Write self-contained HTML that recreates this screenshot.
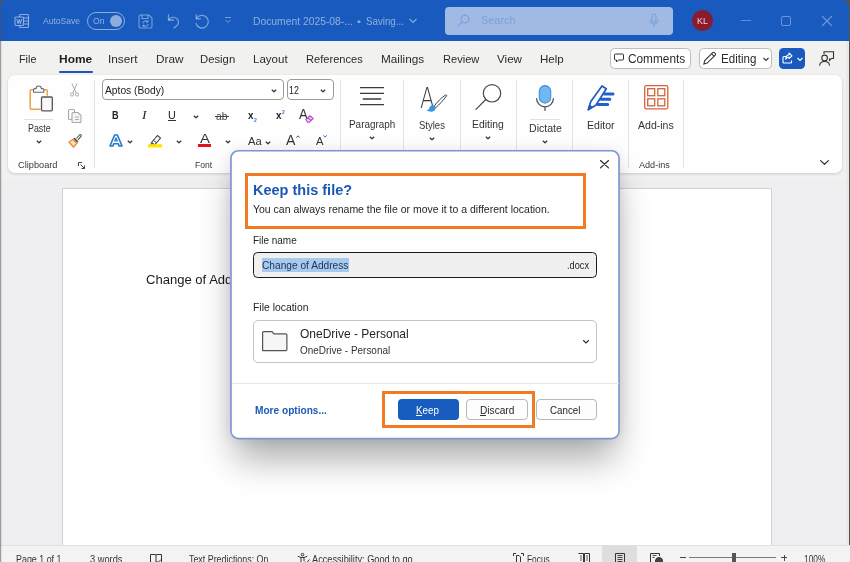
<!DOCTYPE html>
<html lang="en">
<head>
<meta charset="utf-8">
<title>Keep this file? - Word</title>
<style>
*{box-sizing:border-box;margin:0;padding:0}
html,body{width:850px;height:562px;overflow:hidden;background:#f1f1f1}
body{will-change:transform;position:relative;font-family:"Liberation Sans","DejaVu Sans",sans-serif;color:#242424;font-size:12px}
.abs{position:absolute}
.t{position:absolute;white-space:nowrap;line-height:1}
svg{position:absolute;overflow:visible}
svg.tx text{font-family:"Liberation Sans","DejaVu Sans",sans-serif;fill:#242424;white-space:pre}
#titlebar{position:absolute;left:0;top:0;width:850px;height:41px;background:#185abd}
#titlebar .tx text{fill:rgba(255,255,255,.5)}
#tabs{position:absolute;left:0;top:41px;width:850px;height:37px;background:#f1f1f0}
#ribbonbg{position:absolute;left:0;top:76px;width:850px;height:104px;background:#f1f1f1}
#ribbon{position:absolute;left:8px;top:75px;width:834px;height:98px;background:#fefefe;border-radius:7px;box-shadow:0 1px 3px rgba(0,0,0,.16)}
.sep{position:absolute;width:1px;background:#e2e2e2;top:80px;height:88px}
#docbg{position:absolute;left:0;top:180px;width:850px;height:366px;background:#efeef0}
#page{position:absolute;left:62.200px;top:188px;width:709.600px;height:358px;background:#fff;border:1px solid #d2d2d2}
#status{position:absolute;left:0;top:545px;width:850px;height:17px;background:#f3f3f3;border-top:1px solid #e0e0e0}
#dlg{position:absolute;left:230.100px;top:149.900px;width:389.800px;height:289.600px;background:#fff;border-radius:8.500px;box-shadow:0 25px 36px -5px rgba(0,0,0,.33),0 0 14px rgba(0,0,0,.09)}
#edge{position:absolute;left:0;top:4px;width:2px;height:558px;background:linear-gradient(90deg,rgba(80,80,80,.52) 0,rgba(80,80,80,.52) 50%,rgba(80,80,80,.12) 50%)}
</style>
</head>
<body>
<div id="titlebar">
<svg style="left:14px;top:13px" width="16" height="16" viewBox="0 0 16 16" fill="none" stroke="rgba(255,255,255,.5)" stroke-width="1.1"><rect x="5.5" y="1.500" width="9" height="13" rx="1"/><path d="M9.500 5h5M9.500 8h5M9.500 11h5"/><rect x="1" y="4" width="8.500" height="8.500" rx="1" fill="#185abd"/><path d="M2.800 6l1.200 4.600L5.200 6.600l1.200 4L7.700 6" stroke-width="1"/></svg>
<svg class="tx" style="left:43.00px;top:24.40px" width="1" height="1"><text x="0" y="0" textLength="37.00" lengthAdjust="spacingAndGlyphs" style="font-size:9.6px">AutoSave</text></svg>
<div class="abs" style="left:87px;top:12px;width:38px;height:18px;border:1px solid rgba(255,255,255,.5);border-radius:9px"></div>
<svg class="tx" style="left:93.00px;top:24.40px" width="1" height="1"><text x="0" y="0" textLength="11.50" lengthAdjust="spacingAndGlyphs" style="font-size:9.4px">On</text></svg>
<div class="abs" style="left:110px;top:15px;width:12px;height:12px;border-radius:50%;background:rgba(255,255,255,.5)"></div>
<svg style="left:138px;top:13.500px" width="15" height="15" viewBox="0 0 15 15" fill="none" stroke="rgba(255,255,255,.42)" stroke-width="1.100"><path d="M1 2.500A1.500 1.500 0 012.500 1H11l3 3v8.500a1.500 1.500 0 01-1.500 1.500h-10A1.500 1.500 0 011 12.500z"/><path d="M4 1v3.500h6V1"/><path d="M4.800 9.300a2.800 2.800 0 015-1.300M10.200 10a2.800 2.800 0 01-5 1.300" /><path d="M10 6.500V8.200H8.300M5 12.800V11.100h1.700" stroke-width=".9"/></svg>
<svg style="left:167px;top:13.500px" width="14" height="15" viewBox="0 0 14 15" fill="none" stroke="rgba(255,255,255,.42)" stroke-width="1.300" stroke-linecap="round" stroke-linejoin="round"><path d="M1.500 1v5h5"/><path d="M1.800 5.800C3.500 3.500 6.500 2.500 9 4c3 1.800 3.300 5.500 1 7.500L7 14"/></svg>
<svg style="left:194px;top:13px" width="16" height="16" viewBox="0 0 16 16" fill="none" stroke="rgba(255,255,255,.42)" stroke-width="1.300" stroke-linecap="round" stroke-linejoin="round"><path d="M2.300 1.800v4h4"/><path d="M2.600 5.500A6.300 6.300 0 112 10.500"/></svg>
<svg style="left:224px;top:17px" width="8" height="7" viewBox="0 0 8 7" fill="none" stroke="rgba(255,255,255,.42)" stroke-width="1"><path d="M1 .5h6M1.500 3l2.500 2.500L6.500 3"/></svg>
<svg class="tx" style="left:252.50px;top:25.00px" width="1" height="1"><text x="0" y="0" textLength="99.90" lengthAdjust="spacingAndGlyphs" style="font-size:11px">Document 2025-08-...</text></svg>
<svg class="tx" style="left:357.00px;top:25.00px" width="1" height="1"><text x="0" y="0" textLength="4.00" lengthAdjust="spacingAndGlyphs" style="font-size:9px">•</text></svg>
<svg class="tx" style="left:365.80px;top:25.00px" width="1" height="1"><text x="0" y="0" textLength="37.80" lengthAdjust="spacingAndGlyphs" style="font-size:11px">Saving...</text></svg>
<svg style="left:408.500px;top:18px" width="8" height="6" viewBox="0 0 8 6" fill="none" stroke="rgba(255,255,255,.5)" stroke-width="1.100"><path d="M.5 1l3.500 3.500L7.500 1"/></svg>
<div class="abs" style="left:444.8px;top:7px;width:227.99999999999994px;height:27.6px;border-radius:4px;background:#a1bae3"></div>
<svg style="left:456.500px;top:14px" width="13" height="13" viewBox="0 0 13 13" fill="none" stroke="#7a9fdb" stroke-width="1.200"><circle cx="8" cy="5" r="3.800"/><path d="M5.200 7.800L1 12" stroke-linecap="round"/></svg>
<svg class="tx" style="left:481.20px;top:24.20px" width="1" height="1"><text x="0" y="0" textLength="34.60" lengthAdjust="spacingAndGlyphs" style="font-size:11px;fill:#7a9fdb">Search</text></svg>
<svg style="left:649px;top:13px" width="10" height="15" viewBox="0 0 10 15" fill="none" stroke="#7a9fdb" stroke-width="1.100"><rect x="3" y="1" width="4" height="8" rx="2"/><path d="M1 7a4 4 0 008 0M5 11v2.500" stroke-linecap="round"/></svg>
<div class="abs" style="left:692px;top:10.2px;width:21px;height:21.0px;border-radius:50%;background:#8a1a2c"></div>
<svg class="tx" style="left:697.20px;top:23.80px" width="1" height="1"><text x="0" y="0" textLength="10.80" lengthAdjust="spacingAndGlyphs" style="font-size:8.6px;fill:#ecd3d7">KL</text></svg>
<div class="abs" style="left:741px;top:20px;width:10px;height:1px;background:rgba(255,255,255,.32)"></div>
<div class="abs" style="left:781px;top:16px;width:10px;height:10px;border:1px solid rgba(255,255,255,.36);border-radius:2px"></div>
<svg style="left:822px;top:16px" width="10" height="10" viewBox="0 0 10 10" stroke="rgba(255,255,255,.38)" stroke-width="1.100"><path d="M0 0l10 10M10 0L0 10"/></svg>
</div>
<div id="tabs"></div>
<svg class="tx" style="left:19.00px;top:63.00px" width="1" height="1"><text x="0" y="0" textLength="17.40" lengthAdjust="spacingAndGlyphs" style="font-size:11px;fill:#2b2b2b">File</text></svg>
<svg class="tx" style="left:108.40px;top:63.00px" width="1" height="1"><text x="0" y="0" textLength="29.60" lengthAdjust="spacingAndGlyphs" style="font-size:11px;fill:#2b2b2b">Insert</text></svg>
<svg class="tx" style="left:155.70px;top:63.00px" width="1" height="1"><text x="0" y="0" textLength="27.50" lengthAdjust="spacingAndGlyphs" style="font-size:11px;fill:#2b2b2b">Draw</text></svg>
<svg class="tx" style="left:199.80px;top:63.00px" width="1" height="1"><text x="0" y="0" textLength="35.20" lengthAdjust="spacingAndGlyphs" style="font-size:11px;fill:#2b2b2b">Design</text></svg>
<svg class="tx" style="left:253.40px;top:63.00px" width="1" height="1"><text x="0" y="0" textLength="34.60" lengthAdjust="spacingAndGlyphs" style="font-size:11px;fill:#2b2b2b">Layout</text></svg>
<svg class="tx" style="left:306.20px;top:63.00px" width="1" height="1"><text x="0" y="0" textLength="56.80" lengthAdjust="spacingAndGlyphs" style="font-size:11px;fill:#2b2b2b">References</text></svg>
<svg class="tx" style="left:381.40px;top:63.00px" width="1" height="1"><text x="0" y="0" textLength="43.10" lengthAdjust="spacingAndGlyphs" style="font-size:11px;fill:#2b2b2b">Mailings</text></svg>
<svg class="tx" style="left:442.80px;top:63.00px" width="1" height="1"><text x="0" y="0" textLength="36.40" lengthAdjust="spacingAndGlyphs" style="font-size:11px;fill:#2b2b2b">Review</text></svg>
<svg class="tx" style="left:497.20px;top:63.00px" width="1" height="1"><text x="0" y="0" textLength="25.00" lengthAdjust="spacingAndGlyphs" style="font-size:11px;fill:#2b2b2b">View</text></svg>
<svg class="tx" style="left:539.50px;top:63.00px" width="1" height="1"><text x="0" y="0" textLength="23.70" lengthAdjust="spacingAndGlyphs" style="font-size:11px;fill:#2b2b2b">Help</text></svg>
<svg class="tx" style="left:59.30px;top:63.00px" width="1" height="1"><text x="0" y="0" textLength="33.20" lengthAdjust="spacingAndGlyphs" style="font-size:11px;font-weight:700;fill:#1f1f1f">Home</text></svg>
<div class="abs" style="left:59.3px;top:70.6px;width:33.900000000000006px;height:2.0px;background:#1b56b2;border-radius:1px"></div>
<div class="abs" style="left:609.6px;top:48px;width:81.89999999999998px;height:20.599999999999994px;background:#fff;border:1px solid #bdbdbd;border-radius:4.500px"></div>
<svg style="left:613.900px;top:52.500px" width="10" height="10" viewBox="0 0 10 10" fill="none" stroke="#333" stroke-width="1"><path d="M1.500 1h7a1 1 0 011 1v4a1 1 0 01-1 1H4.500L2.500 9V7h-1a1 1 0 01-1-1V2a1 1 0 011-1z"/></svg>
<svg class="tx" style="left:628.00px;top:63.00px" width="1" height="1"><text x="0" y="0" textLength="57.20" lengthAdjust="spacingAndGlyphs" style="font-size:12px;fill:#2b2b2b">Comments</text></svg>
<div class="abs" style="left:699px;top:48px;width:72.5px;height:20.599999999999994px;background:#fff;border:1px solid #bdbdbd;border-radius:4.500px"></div>
<svg style="left:702.300px;top:51.200px" width="15.200" height="14.500" viewBox="0 0 14 14" fill="none" stroke="#333" stroke-width="1"><path d="M1.500 12.500l.8-3.200L10 1.600a1.200 1.200 0 011.700 0l.7.700a1.200 1.200 0 010 1.700L4.700 11.700z"/><path d="M9 2.700l2.400 2.400"/></svg>
<svg class="tx" style="left:720.60px;top:63.00px" width="1" height="1"><text x="0" y="0" textLength="35.40" lengthAdjust="spacingAndGlyphs" style="font-size:12px;fill:#2b2b2b">Editing</text></svg>
<svg style="left:762.500px;top:57px" width="6" height="5" viewBox="0 0 6 5" fill="none" stroke="#333" stroke-width="1.100"><path d="M.5 1L3 3.500 5.500 1"/></svg>
<div class="abs" style="left:778.7px;top:48px;width:26.699999999999932px;height:20.799999999999997px;background:#185abd;border-radius:4.500px"></div>
<svg style="left:782px;top:52px" width="11" height="12" viewBox="0 0 11 12" fill="none" stroke="#fff" stroke-width="1.100"><path d="M4 4.500H2a1 1 0 00-1 1V10a1 1 0 001 1h6.500a1 1 0 001-1V8.500"/><path d="M7 1l3 2.800L7 6.500V5C5.500 5 4.500 5.800 3.800 7.200 3.800 4.500 5 3 7 2.700z" stroke-linejoin="round"/></svg>
<svg style="left:797px;top:57px" width="6" height="5" viewBox="0 0 6 5" fill="none" stroke="#fff" stroke-width="1.100"><path d="M.5 1L3 3.500 5.500 1"/></svg>
<svg style="left:819px;top:50.500px" width="15.500" height="15.500" viewBox="0 0 15.500 15.500" fill="none" stroke="#333" stroke-width="1.100"><path d="M5 3V.800h9.500V7.500h-2.300L10.500 9.300V7.500"/><circle cx="5.600" cy="6.900" r="2.800"/><path d="M.700 14.800c0-2.800 2.100-4.300 4.900-4.300s4.900 1.500 4.900 4.300"/></svg>
<div id="ribbonbg"></div>
<div id="ribbon"></div>
<div class="sep" style="left:94.0px"></div>
<div class="sep" style="left:340.0px"></div>
<div class="sep" style="left:403.0px"></div>
<div class="sep" style="left:460.0px"></div>
<div class="sep" style="left:516.0px"></div>
<div class="sep" style="left:572.0px"></div>
<div class="sep" style="left:627.7px"></div>
<div class="sep" style="left:683.0px"></div>
<svg style="left:28px;top:85px" width="26" height="28" viewBox="0 0 26 28" fill="none"><path d="M5.500 4.800H3.200a1 1 0 00-1 1V23.200a1 1 0 001 1H12.500M16 4.800h2.300a1 1 0 011 1V10.800" stroke="#efa046" stroke-width="1.500"/><path d="M5.600 7.200V4.600a1 1 0 011-1H8c0-1.500 1.200-2.600 2.700-2.600s2.700 1.100 2.700 2.600h1.400a1 1 0 011 1V7.200z" stroke="#6a6a6a" stroke-width="1.100" fill="#fdfdfd"/><rect x="13.500" y="12" width="10.800" height="13.800" rx="1" stroke="#555" stroke-width="1.300" fill="#f7f7f7"/></svg>
<div class="abs" style="left:24px;top:118.5px;width:29px;height:1.0px;background:#e0e0e0"></div>
<svg class="tx" style="left:27.50px;top:131.60px" width="1" height="1"><text x="0" y="0" textLength="22.60" lengthAdjust="spacingAndGlyphs" style="font-size:10.8px;fill:#333">Paste</text></svg>
<svg style="left:35.5px;top:140px" width="6" height="4" viewBox="0 0 6 4" fill="none" stroke="#333" stroke-width="1.200" stroke-linejoin="round"><path d="M.800.700L3 2.800 5.200.700"/></svg>
<svg style="left:70px;top:83px" width="9" height="14" viewBox="0 0 9 14" fill="none" stroke="#a9a9a9" stroke-width="1"><path d="M2 .500L6.200 10M7 .500L2.800 10"/><circle cx="2" cy="11.500" r="1.600"/><circle cx="7" cy="11.500" r="1.600"/></svg>
<svg style="left:67.500px;top:108.500px" width="14" height="14" viewBox="0 0 14 14" fill="none" stroke="#a9a9a9" stroke-width="1.100"><path d="M4 10.500H1.500a1 1 0 01-1-1v-8a1 1 0 011-1h4a1 1 0 011 1V3"/><path d="M5 3.500h5l3 3v6a1 1 0 01-1 1H5a1 1 0 01-1-1v-8a1 1 0 011-1z" fill="#f4f4f4"/><path d="M7 8h4M7 10.500h4" stroke-width=".9"/></svg>
<svg style="left:68px;top:134px" width="14" height="14" viewBox="0 0 14 14" fill="none"><path d="M8.500 4.500l3-3.500a1 1 0 011.500 1.400L10 5.800" stroke="#555" stroke-width="1.100"/><path d="M6.500 3.500l4 4-1.300 1.300-4-4z" fill="#555"/><path d="M4.800 5.500L1 8l4.500 5 3.300-3.800z" stroke="#e8872e" stroke-width="1.200" fill="#fde3c8"/></svg>
<svg class="tx" style="left:18.40px;top:167.60px" width="1" height="1"><text x="0" y="0" textLength="39.50" lengthAdjust="spacingAndGlyphs" style="font-size:9.6px;fill:#3a3a3a">Clipboard</text></svg>
<svg style="left:77.500px;top:162px" width="7" height="7" viewBox="0 0 7 7" fill="none" stroke="#444" stroke-width="1"><path d="M.5 4V.500H4"/><path d="M2.500 2.500l4 4M6.500 3.500v3h-3"/></svg>
<div class="abs" style="left:102px;top:79px;width:182.3px;height:21.400000000000006px;background:#fff;border:1px solid #9a9a9a;border-radius:4px"></div>
<svg class="tx" style="left:104.70px;top:94.00px" width="1" height="1"><text x="0" y="0" textLength="59.30" lengthAdjust="spacingAndGlyphs" style="font-size:11.3px;fill:#222">Aptos (Body)</text></svg>
<svg style="left:271px;top:89px" width="6" height="4" viewBox="0 0 6 4" fill="none" stroke="#333" stroke-width="1.200" stroke-linejoin="round"><path d="M.800.700L3 2.800 5.200.700"/></svg>
<div class="abs" style="left:286.7px;top:79px;width:47.80000000000001px;height:21.400000000000006px;background:#fff;border:1px solid #9a9a9a;border-radius:4px"></div>
<svg class="tx" style="left:289.40px;top:94.00px" width="1" height="1"><text x="0" y="0" textLength="9.90" lengthAdjust="spacingAndGlyphs" style="font-size:11.3px;fill:#222">12</text></svg>
<svg style="left:320px;top:89px" width="6" height="4" viewBox="0 0 6 4" fill="none" stroke="#333" stroke-width="1.200" stroke-linejoin="round"><path d="M.800.700L3 2.800 5.200.700"/></svg>
<svg class="tx" style="left:112.00px;top:118.80px" width="1" height="1"><text x="0" y="0" textLength="6.60" lengthAdjust="spacingAndGlyphs" style="font-size:11.2px;font-weight:700;fill:#222">B</text></svg>
<svg class="tx" style="left:141.50px;top:118.90px" width="1" height="1"><text x="0" y="0" textLength="4.50" lengthAdjust="spacingAndGlyphs" style="font-size:11.5px;fill:#222;font-style:italic;font-family:'Liberation Serif',serif;font-size:12.500px">I</text></svg>
<svg class="tx" style="left:168.20px;top:118.50px" width="1" height="1"><text x="0" y="0" textLength="7.80" lengthAdjust="spacingAndGlyphs" style="font-size:11px;fill:#222">U</text></svg>
<div class="abs" style="left:168px;top:119.5px;width:8.199999999999989px;height:1.0px;background:#333"></div>
<svg style="left:193.4px;top:114.5px" width="6" height="4" viewBox="0 0 6 4" fill="none" stroke="#333" stroke-width="1.200" stroke-linejoin="round"><path d="M.800.700L3 2.800 5.200.700"/></svg>
<svg class="tx" style="left:216.20px;top:119.50px" width="1" height="1"><text x="0" y="0" textLength="11.40" lengthAdjust="spacingAndGlyphs" style="font-size:11.5px;fill:#444">ab</text></svg>
<div class="abs" style="left:214.6px;top:116.3px;width:14.0px;height:1.0px;background:#444"></div>
<svg class="tx" style="left:247.50px;top:119.30px" width="1" height="1"><text x="0" y="0" textLength="5.50" lengthAdjust="spacingAndGlyphs" style="font-size:11.5px;font-weight:700;fill:#222">x</text></svg>
<svg class="tx" style="left:253.60px;top:122.00px" width="1" height="1"><text x="0" y="0" textLength="2.80" lengthAdjust="spacingAndGlyphs" style="font-size:5.8px;font-weight:700;fill:#2b7cd3">2</text></svg>
<svg class="tx" style="left:276.00px;top:119.30px" width="1" height="1"><text x="0" y="0" textLength="5.50" lengthAdjust="spacingAndGlyphs" style="font-size:11.5px;font-weight:700;fill:#222">x</text></svg>
<svg class="tx" style="left:282.00px;top:114.30px" width="1" height="1"><text x="0" y="0" textLength="2.80" lengthAdjust="spacingAndGlyphs" style="font-size:5.8px;font-weight:700;fill:#2b7cd3">2</text></svg>
<svg class="tx" style="left:298.80px;top:119.40px" width="1" height="1"><text x="0" y="0" textLength="8.70" lengthAdjust="spacingAndGlyphs" style="font-size:14px;fill:#333">A</text></svg>
<svg style="left:304.500px;top:114.500px" width="9" height="8" viewBox="0 0 9 8" fill="none" stroke="#b146c2" stroke-width="1.100"><path d="M1 4.500L5 .800l3.200 2.700-4 3.700H2.500z" fill="#f3d6f7"/><path d="M3 2.800l3.100 2.700"/></svg>
<svg style="left:108.500px;top:134px" width="14" height="13" viewBox="0 0 14 13" fill="none" stroke="#2278cf" stroke-width="1.600" stroke-linejoin="round"><path d="M1 12L5.600 1h2.800L13 12h-2.900l-.8-2.300H4.700L3.900 12z"/><path d="M5.700 7L7 3.800 8.300 7z" stroke-width="1.100"/></svg>
<svg style="left:127px;top:140px" width="6" height="4" viewBox="0 0 6 4" fill="none" stroke="#333" stroke-width="1.200" stroke-linejoin="round"><path d="M.800.700L3 2.800 5.200.700"/></svg>
<svg style="left:148px;top:134px" width="14" height="14" viewBox="0 0 14 14" fill="none"><path d="M3.500 8.500l6-7 3 2.500-6 7z" stroke="#444" stroke-width="1.100" fill="#fbfbfb"/><path d="M3.500 8.500L2.800 10.800l1.500-.300" stroke="#444" stroke-width="1"/><path d="M5.500 6.200l3 2.600" stroke="#444" stroke-width="1"/><rect x="0" y="10.200" width="14" height="3.300" fill="#ffe600"/></svg>
<svg style="left:176px;top:140px" width="6" height="4" viewBox="0 0 6 4" fill="none" stroke="#333" stroke-width="1.200" stroke-linejoin="round"><path d="M.800.700L3 2.800 5.200.700"/></svg>
<svg class="tx" style="left:199.50px;top:143.20px" width="1" height="1"><text x="0" y="0" textLength="9.90" lengthAdjust="spacingAndGlyphs" style="font-size:13.4px;fill:#333">A</text></svg>
<div class="abs" style="left:197.5px;top:144px;width:13.5px;height:3.4000000000000057px;background:#e0101e"></div>
<svg style="left:225.4px;top:140px" width="6" height="4" viewBox="0 0 6 4" fill="none" stroke="#333" stroke-width="1.200" stroke-linejoin="round"><path d="M.800.700L3 2.800 5.200.700"/></svg>
<svg class="tx" style="left:247.50px;top:145.00px" width="1" height="1"><text x="0" y="0" textLength="13.70" lengthAdjust="spacingAndGlyphs" style="font-size:11.3px;fill:#333">Aa</text></svg>
<svg style="left:264.5px;top:140.5px" width="6" height="4" viewBox="0 0 6 4" fill="none" stroke="#333" stroke-width="1.200" stroke-linejoin="round"><path d="M.800.700L3 2.800 5.200.700"/></svg>
<svg class="tx" style="left:285.90px;top:145.00px" width="1" height="1"><text x="0" y="0" textLength="9.40" lengthAdjust="spacingAndGlyphs" style="font-size:15px;fill:#333">A</text></svg>
<svg style="left:295.500px;top:134.500px" width="4" height="3" viewBox="0 0 4 3" fill="none" stroke="#4d5d55" stroke-width="1"><path d="M.300 2.700L2 .800l1.700 1.900"/></svg>
<svg class="tx" style="left:316.00px;top:145.00px" width="1" height="1"><text x="0" y="0" textLength="7.50" lengthAdjust="spacingAndGlyphs" style="font-size:11.5px;fill:#333">A</text></svg>
<svg style="left:323px;top:134.800px" width="4" height="3" viewBox="0 0 4 3" fill="none" stroke="#2278cf" stroke-width="1"><path d="M.300.300L2 2.200 3.700.300"/></svg>
<svg class="tx" style="left:194.60px;top:167.60px" width="1" height="1"><text x="0" y="0" textLength="17.20" lengthAdjust="spacingAndGlyphs" style="font-size:9.6px;fill:#3a3a3a">Font</text></svg>
<svg style="left:360px;top:87px" width="24" height="19" viewBox="0 0 24 19" stroke="#3c3c3c" stroke-width="1.300"><path d="M0 .600h24M0 6.300h24M2.800 12h18.400M0 17.700h24"/></svg>
<svg class="tx" style="left:349.00px;top:127.60px" width="1" height="1"><text x="0" y="0" textLength="46.30" lengthAdjust="spacingAndGlyphs" style="font-size:10.8px;fill:#333">Paragraph</text></svg>
<svg style="left:368.5px;top:135.5px" width="6" height="4" viewBox="0 0 6 4" fill="none" stroke="#333" stroke-width="1.200" stroke-linejoin="round"><path d="M.800.700L3 2.800 5.200.700"/></svg>
<svg class="tx" style="left:420.30px;top:107.70px" width="1" height="1"><text x="0" y="0" textLength="14.50" lengthAdjust="spacingAndGlyphs" style="font-size:27.6px;fill:#3a3a3a;font-family:'DejaVu Sans Light','DejaVu Sans',sans-serif;font-weight:200">A</text></svg>
<svg style="left:426px;top:94px" width="22" height="18" viewBox="0 0 22 18" fill="none"><path d="M8 12.500C11 8 15.500 3.500 19.500 1c.8-.5 1.500.300 1 1-3 4-7 8.500-10.700 11.700z" fill="#fbfbfb" stroke="#444" stroke-width="1"/><path d="M.500 16c2 .300 2.700-1.200 3.200-2.800.700-2 3.200-2.600 4.900-1.100 1.600 1.500 1.200 4-.700 5C5.700 18.300 2.600 17.700.500 16z" fill="#3a96dd"/></svg>
<svg class="tx" style="left:419.30px;top:128.60px" width="1" height="1"><text x="0" y="0" textLength="25.90" lengthAdjust="spacingAndGlyphs" style="font-size:10.8px;fill:#333">Styles</text></svg>
<svg style="left:429px;top:137px" width="6" height="4" viewBox="0 0 6 4" fill="none" stroke="#333" stroke-width="1.200" stroke-linejoin="round"><path d="M.800.700L3 2.800 5.200.700"/></svg>
<svg style="left:475px;top:83px" width="28" height="28" viewBox="0 0 28 28" fill="none" stroke="#4a4a4a" stroke-width="1.200"><circle cx="17" cy="10.300" r="8.700"/><path d="M10.800 16.500L1 26.300" stroke-linecap="round"/></svg>
<svg class="tx" style="left:472.20px;top:127.60px" width="1" height="1"><text x="0" y="0" textLength="31.80" lengthAdjust="spacingAndGlyphs" style="font-size:10.8px;fill:#333">Editing</text></svg>
<svg style="left:485px;top:135.5px" width="6" height="4" viewBox="0 0 6 4" fill="none" stroke="#333" stroke-width="1.200" stroke-linejoin="round"><path d="M.800.700L3 2.800 5.200.700"/></svg>
<svg style="left:536px;top:85px" width="18" height="26" viewBox="0 0 18 26" fill="none"><rect x="3.300" y=".600" width="11.400" height="17.500" rx="5.700" fill="#73b7f0" stroke="#3a8fde" stroke-width="1.100"/><path d="M.600 13.500a8.400 8.400 0 0016.800 0M9 22v3.500" stroke="#4a4a4a" stroke-width="1.200" stroke-linecap="round"/></svg>
<div class="abs" style="left:530px;top:118.5px;width:30px;height:1.0px;background:#e0e0e0"></div>
<svg class="tx" style="left:528.70px;top:131.60px" width="1" height="1"><text x="0" y="0" textLength="32.90" lengthAdjust="spacingAndGlyphs" style="font-size:10.8px;fill:#333">Dictate</text></svg>
<svg style="left:541.7px;top:140px" width="6" height="4" viewBox="0 0 6 4" fill="none" stroke="#333" stroke-width="1.200" stroke-linejoin="round"><path d="M.800.700L3 2.800 5.200.700"/></svg>
<svg style="left:586px;top:84px" width="29" height="28" viewBox="0 0 29 28" fill="none"><path d="M2.200 25.800L4.800 17.600 16 2l4.300 2.700L9.800 21.200z" stroke="#1c5cc0" stroke-width="1.700" stroke-linejoin="round" fill="#fefefe"/><path d="M2.200 25.800l1.500-4.800 3 2.200z" fill="#1c5cc0" stroke="#1c5cc0" stroke-width=".8" stroke-linejoin="round"/><path d="M18.500 9.900h8.500M15.200 15.200h8.600M12 20.500h9.700" stroke="#1f62cc" stroke-width="3" stroke-linecap="round"/></svg>
<svg class="tx" style="left:587.00px;top:128.60px" width="1" height="1"><text x="0" y="0" textLength="27.60" lengthAdjust="spacingAndGlyphs" style="font-size:10.8px;fill:#333">Editor</text></svg>
<svg style="left:644px;top:85.300px" width="24.500" height="24.500" viewBox="0 0 24.500 24.500" fill="none" stroke="#d4633d" stroke-width="1.300"><rect x=".700" y=".700" width="23.100" height="23.100" rx="1.500"/><rect x="3.700" y="3.700" width="7" height="7"/><rect x="13.800" y="3.700" width="7" height="7"/><rect x="3.700" y="13.800" width="7" height="7"/><rect x="13.800" y="13.800" width="7" height="7"/></svg>
<svg class="tx" style="left:638.40px;top:128.60px" width="1" height="1"><text x="0" y="0" textLength="35.70" lengthAdjust="spacingAndGlyphs" style="font-size:10.8px;fill:#333">Add-ins</text></svg>
<svg class="tx" style="left:639.30px;top:168.00px" width="1" height="1"><text x="0" y="0" textLength="30.80" lengthAdjust="spacingAndGlyphs" style="font-size:9.6px;fill:#3a3a3a">Add-ins</text></svg>
<svg style="left:820px;top:159.500px" width="9" height="5" viewBox="0 0 9 5" fill="none" stroke="#333" stroke-width="1.200" stroke-linecap="round" stroke-linejoin="round"><path d="M.600.600L4.500 4.300 8.400.600"/></svg>
<div id="docbg"></div>
<div id="page"></div>
<svg class="tx" style="left:146.20px;top:284.30px" width="1" height="1"><text x="0" y="0" textLength="111.02" lengthAdjust="spacingAndGlyphs" style="font-size:12.3px;fill:#1a1a1a">Change of Address</text></svg>
<div class="abs" style="left:845.5px;top:41px;width:3.0px;height:521px;background:#e9e9e9"></div>
<div class="abs" style="left:848.5px;top:0px;width:1.5px;height:562px;background:#50554f"></div>
<div class="abs" style="left:843px;top:0px;width:6px;height:6px;background:radial-gradient(circle at 0 100%,rgba(80,85,79,0) 5.300px,#50554f 6px)"></div>
<div class="abs" style="left:0px;top:0px;width:5px;height:5px;background:radial-gradient(circle at 100% 100%,rgba(80,85,79,0) 4.300px,#50554f 5px)"></div>
<div id="status"></div>
<div class="abs" style="left:601.6px;top:546px;width:35.39999999999998px;height:16px;background:#dedede"></div>
<svg class="tx" style="left:15.50px;top:563.00px" width="1" height="1"><text x="0" y="0" textLength="45.50" lengthAdjust="spacingAndGlyphs" style="font-size:10px;fill:#333">Page 1 of 1</text></svg>
<svg class="tx" style="left:89.80px;top:563.00px" width="1" height="1"><text x="0" y="0" textLength="32.40" lengthAdjust="spacingAndGlyphs" style="font-size:10px;fill:#333">3 words</text></svg>
<svg class="tx" style="left:189.40px;top:563.00px" width="1" height="1"><text x="0" y="0" textLength="79.40" lengthAdjust="spacingAndGlyphs" style="font-size:10px;fill:#333">Text Predictions: On</text></svg>
<svg class="tx" style="left:311.80px;top:563.00px" width="1" height="1"><text x="0" y="0" textLength="100.60" lengthAdjust="spacingAndGlyphs" style="font-size:10px;fill:#333">Accessibility: Good to go</text></svg>
<svg class="tx" style="left:526.70px;top:563.00px" width="1" height="1"><text x="0" y="0" textLength="22.70" lengthAdjust="spacingAndGlyphs" style="font-size:10px;fill:#333">Focus</text></svg>
<svg class="tx" style="left:803.70px;top:563.00px" width="1" height="1"><text x="0" y="0" textLength="21.30" lengthAdjust="spacingAndGlyphs" style="font-size:10px;fill:#333">100%</text></svg>
<svg style="left:149.500px;top:553.500px" width="12" height="10" viewBox="0 0 12 10" fill="none" stroke="#333" stroke-width="1"><path d="M.5 9V.500h4.500a1 1 0 011 1V9M6 1.500a1 1 0 011-1h4.500V9"/><path d="M6.500 7l1.500 1.500L11 5.500"/></svg>
<svg style="left:296.500px;top:553px" width="13" height="10" viewBox="0 0 13 10" fill="none" stroke="#333" stroke-width="1"><circle cx="5.500" cy="1.700" r="1.300"/><path d="M.8 3.200l3 1.300h3.400l3-1.300M4 4.500V10M7 4.500V8"/><path d="M8 8.500l1.500 1.500 3-3.500"/></svg>
<svg style="left:512.500px;top:553px" width="11" height="10" viewBox="0 0 11 10" fill="none" stroke="#333" stroke-width="1"><path d="M.5 3V.500H3M8 .500h2.500V3"/><path d="M3.500 10V2.500H6L7.500 4v6" /></svg>
<svg style="left:578px;top:553px" width="12" height="10" viewBox="0 0 12 10" fill="none" stroke="#333" stroke-width="1"><path d="M.5.500h5v9.500M6.500 10V.500h5V10"/><path d="M2 3h2M2 5h2M2 7h2M8 3h2M8 5h2M8 7h2" stroke-width=".8"/></svg>
<svg style="left:614.500px;top:553px" width="10" height="10" viewBox="0 0 10 10" fill="none" stroke="#333" stroke-width="1"><path d="M.5 10V.500h9V10"/><path d="M2.500 2.500h5M2.500 4.500h5M2.500 6.500h5M2.500 8.500h5" stroke-width=".9"/></svg>
<svg style="left:650px;top:553px" width="13" height="10" viewBox="0 0 13 10" fill="none" stroke="#333" stroke-width="1"><path d="M.5 10V.500h9V3"/><path d="M2.500 2.500h4M2.500 4.500h2" stroke-width=".9"/><circle cx="9" cy="8" r="3.500" fill="#444"/></svg>
<div class="abs" style="left:680px;top:557px;width:6px;height:1px;background:#444"></div>
<div class="abs" style="left:689.3px;top:557px;width:87.20000000000005px;height:1px;background:#7a7a7a"></div>
<div class="abs" style="left:732px;top:553px;width:3.5px;height:9px;background:#555"></div>
<div class="abs" style="left:781px;top:557px;width:6px;height:1px;background:#444"></div>
<div class="abs" style="left:783.5px;top:554.5px;width:1.0px;height:6.0px;background:#444"></div>
<div id="dlg"></div>
<svg style="left:0;top:0" width="850" height="562"><rect x="230.950" y="150.750" width="388.100" height="287.900" rx="7.600" fill="#fff" stroke="#7b97cd" stroke-width="1.700"/></svg>
<svg style="left:599.600px;top:160.300px" width="9" height="8.400" viewBox="0 0 9 8.400" stroke="#222" stroke-width="1.100" stroke-linecap="round"><path d="M.5.500l8 7.400M8.500.500l-8 7.400"/></svg>
<div class="abs" style="left:245px;top:173.2px;width:340.70000000000005px;height:55.80000000000001px;border:3.100px solid #f07b22"></div>
<svg class="tx" style="left:253.40px;top:194.90px" width="1" height="1"><text x="0" y="0" textLength="99.10" lengthAdjust="spacingAndGlyphs" style="font-size:15.3px;font-weight:700;fill:#1a58b4">Keep this file?</text></svg>
<svg class="tx" style="left:253.00px;top:213.10px" width="1" height="1"><text x="0" y="0" textLength="296.70" lengthAdjust="spacingAndGlyphs" style="font-size:10.3px;fill:#262626">You can always rename the file or move it to a different location.</text></svg>
<svg class="tx" style="left:253.30px;top:243.70px" width="1" height="1"><text x="0" y="0" textLength="43.70" lengthAdjust="spacingAndGlyphs" style="font-size:10.3px;fill:#262626">File name</text></svg>
<div class="abs" style="left:252.7px;top:252.1px;width:344.59999999999997px;height:25.900000000000006px;background:#f0f0f0;border:1.900px solid #1a1a1a;border-radius:4.500px"></div>
<div class="abs" style="left:261.7px;top:257.7px;width:87.5px;height:14.0px;background:#a8c9ed"></div>
<svg class="tx" style="left:262.20px;top:268.50px" width="1" height="1"><text x="0" y="0" textLength="86.40" lengthAdjust="spacingAndGlyphs" style="font-size:10.8px;fill:#1b3354">Change of Address</text></svg>
<svg class="tx" style="left:567.20px;top:268.50px" width="1" height="1"><text x="0" y="0" textLength="22.00" lengthAdjust="spacingAndGlyphs" style="font-size:10px;fill:#262626">.docx</text></svg>
<svg class="tx" style="left:253.40px;top:310.90px" width="1" height="1"><text x="0" y="0" textLength="55.50" lengthAdjust="spacingAndGlyphs" style="font-size:10.3px;fill:#262626">File location</text></svg>
<div class="abs" style="left:253.2px;top:319.6px;width:343.8px;height:43.39999999999998px;background:#fff;border:1px solid #c4c4c4;border-radius:5px"></div>
<svg style="left:262px;top:330.500px" width="25.500" height="20.200" viewBox="0 0 25.500 20.200" fill="#f6f6f6" stroke="#555" stroke-width="1.200" stroke-linejoin="round"><path d="M.600 19.600V1.600a1 1 0 011-1h8.500l1.700 2.200h12.100a1 1 0 011 1V18.600a1 1 0 01-1 1z"/></svg>
<svg class="tx" style="left:299.80px;top:338.30px" width="1" height="1"><text x="0" y="0" textLength="108.70" lengthAdjust="spacingAndGlyphs" style="font-size:12.2px;fill:#262626">OneDrive - Personal</text></svg>
<svg class="tx" style="left:299.80px;top:354.30px" width="1" height="1"><text x="0" y="0" textLength="90.20" lengthAdjust="spacingAndGlyphs" style="font-size:10.2px;fill:#333">OneDrive - Personal</text></svg>
<svg style="left:582.500px;top:339.500px" width="6" height="4" viewBox="0 0 6 4" fill="none" stroke="#333" stroke-width="1.100" stroke-linecap="round" stroke-linejoin="round"><path d="M.5.500L3 3 5.500.500"/></svg>
<div class="abs" style="left:231.5px;top:383px;width:387.0px;height:1px;background:#e6e6e6"></div>
<svg class="tx" style="left:255.30px;top:413.70px" width="1" height="1"><text x="0" y="0" textLength="71.90" lengthAdjust="spacingAndGlyphs" style="font-size:10.5px;font-weight:700;fill:#1a5ab8">More options...</text></svg>
<div class="abs" style="left:381.8px;top:391px;width:153.2px;height:36.60000000000002px;border:3.200px solid #f07b22"></div>
<div class="abs" style="left:397.6px;top:399.2px;width:61.0px;height:20.80000000000001px;background:#195cc0;border-radius:4px"></div>
<svg class="tx" style="left:415.90px;top:414.40px" width="1" height="1"><text x="0" y="0" textLength="22.90" lengthAdjust="spacingAndGlyphs" style="font-size:11px;fill:#fff">Keep</text></svg>
<div class="abs" style="left:416px;top:414.9px;width:6.300000000000011px;height:0.8000000000000114px;background:#fff"></div>
<div class="abs" style="left:466.2px;top:399.4px;width:61.80000000000001px;height:20.600000000000023px;background:#fdfdfd;border:1px solid #b8b8b8;border-radius:4px"></div>
<svg class="tx" style="left:479.60px;top:414.10px" width="1" height="1"><text x="0" y="0" textLength="34.40" lengthAdjust="spacingAndGlyphs" style="font-size:11px;fill:#262626">Discard</text></svg>
<div class="abs" style="left:479.8px;top:414.9px;width:6.599999999999966px;height:0.8000000000000114px;background:#333"></div>
<div class="abs" style="left:536px;top:399.4px;width:60.799999999999955px;height:20.600000000000023px;background:#fdfdfd;border:1px solid #b8b8b8;border-radius:4px"></div>
<svg class="tx" style="left:550.40px;top:414.10px" width="1" height="1"><text x="0" y="0" textLength="30.40" lengthAdjust="spacingAndGlyphs" style="font-size:11px;fill:#262626">Cancel</text></svg>
<div id="edge"></div>
</body>
</html>
